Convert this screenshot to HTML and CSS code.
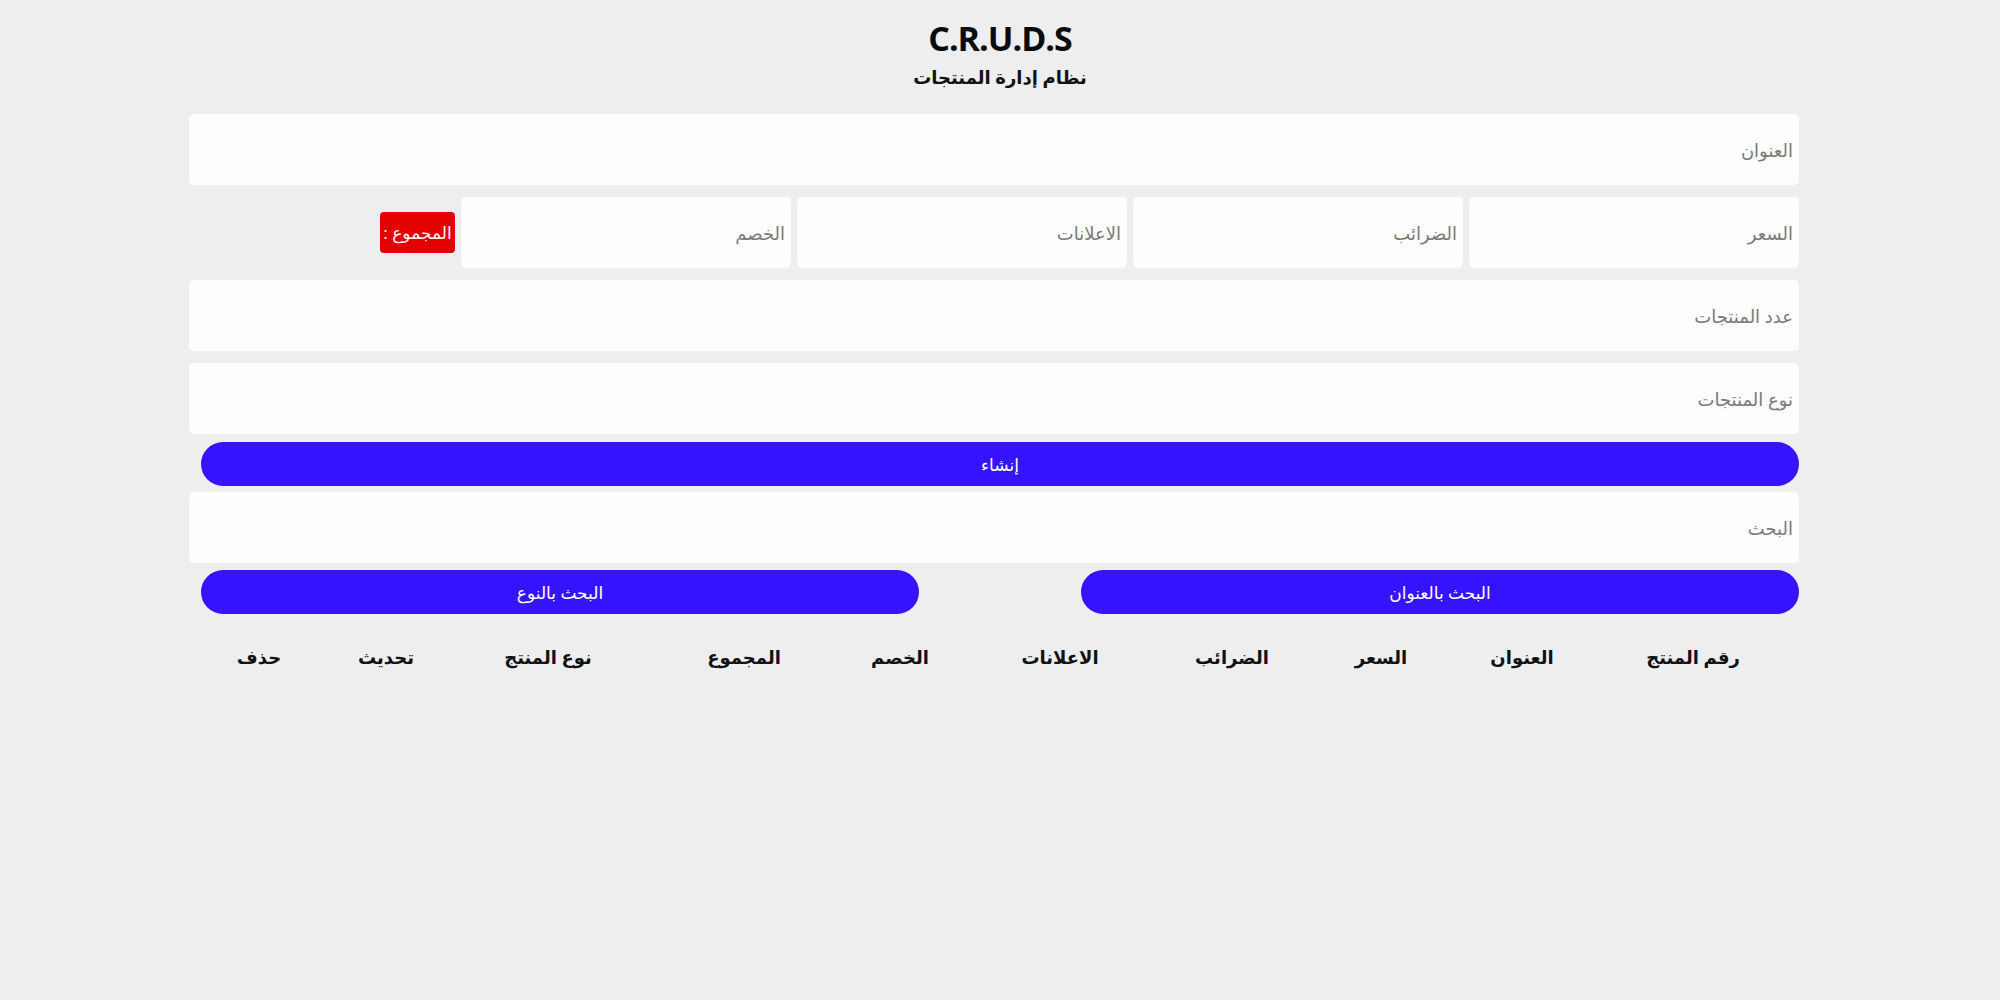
FILE: index.html
```html
<!DOCTYPE html>
<html lang="ar" dir="rtl">
<head>
<meta charset="utf-8">
<title>CRUDS</title>
<link rel="stylesheet" href="styles.css">
</head>
<body>
<div class="crud">
  <div class="head">
    <h2 class="title">C.R.U.D.S</h2>
    <p class="subtitle">نظام إدارة المنتجات</p>
  </div>
  <div class="inputs">
    <input class="field" type="text" placeholder="العنوان">
    <div class="price">
      <input class="field small" type="number" placeholder="السعر">
      <input class="field small" type="number" placeholder="الضرائب">
      <input class="field small" type="number" placeholder="الاعلانات">
      <input class="field small" type="number" placeholder="الخصم">
      <small class="total">المجموع :</small>
    </div>
    <input class="field" type="number" placeholder="عدد المنتجات">
    <input class="field" type="text" placeholder="نوع المنتجات">
    <button class="btn create">إنشاء</button>
  </div>
  <div class="outputs">
    <input class="field" type="text" placeholder="البحث">
    <div class="search-btns">
      <button class="btn half">البحث بالعنوان</button>
      <button class="btn half">البحث بالنوع</button>
    </div>
  </div>
  <div class="table">
    <div class="th">رقم المنتج</div>
    <div class="th">العنوان</div>
    <div class="th">السعر</div>
    <div class="th">الضرائب</div>
    <div class="th">الاعلانات</div>
    <div class="th">الخصم</div>
    <div class="th">المجموع</div>
    <div class="th">نوع المنتج</div>
    <div class="th">تحديث</div>
    <div class="th">حذف</div>
  </div>
</div>
</body>
</html>
```
FILE: styles.css
```css
* { box-sizing: border-box; }
html, body {
  margin: 0;
  padding: 0;
  background: #eceef0;
  font-family: "Open Sans", "DejaVu Sans", sans-serif;
  color: #111;
}
.crud {
  width: 1610px;
  margin-left: 189px;
  margin-right: auto;
}
.head {
  text-align: center;
  padding-top: 14px;
  padding-left: 12px;
}
.title {
  margin: 0;
  font-size: 34px;
  font-weight: 700;
  letter-spacing: -1px;
  line-height: 48px;
  color: #0a0a0a;
}
.subtitle {
  margin: 0;
  font-size: 18px;
  font-weight: 700;
  line-height: 30px;
}
.inputs {
  margin-top: 22px;
  display: flex;
  flex-direction: column;
}
.field {
  display: block;
  width: 100%;
  height: 71px;
  border: none;
  outline: none;
  border-radius: 5px;
  background: #fdfdfd;
  padding: 0 6px;
  font-family: "Open Sans", "DejaVu Sans", sans-serif;
  font-size: 18px;
  color: #333;
  margin-bottom: 12px;
}
.field::placeholder { color: #7a7a7a; }
.price {
  display: flex;
  align-items: center;
  gap: 6px;
  margin-bottom: 12px;
}
.price .small {
  width: 330px;
  margin: 0;
}
.total {
  background: #e30000;
  color: #fff;
  border-radius: 4px;
  height: 41px;
  width: 75px;
  font-size: 17px;
  display: flex;
  align-items: center;
  justify-content: center;
}
.btn {
  border: none;
  background: #3414ff;
  color: #fff;
  height: 44px;
  border-radius: 22px;
  font-family: "Open Sans", "DejaVu Sans", sans-serif;
  font-size: 17px;
  cursor: pointer;
}
.create {
  width: 1598px;
  margin-top: -4px;
  margin-bottom: 6px;
}
.outputs .field { margin-bottom: 7px; }
.search-btns {
  display: flex;
  justify-content: space-between;
  width: 1598px;
}
.half { width: 718px; }
.table {
  display: grid;
  grid-template-columns: 212px 130px 152px 146px 198px 122px 190px 202px 122px 132px;
  margin-top: 28px;
}
.th {
  text-align: center;
  font-size: 18px;
  font-weight: 700;
  line-height: 30px;
}
```
